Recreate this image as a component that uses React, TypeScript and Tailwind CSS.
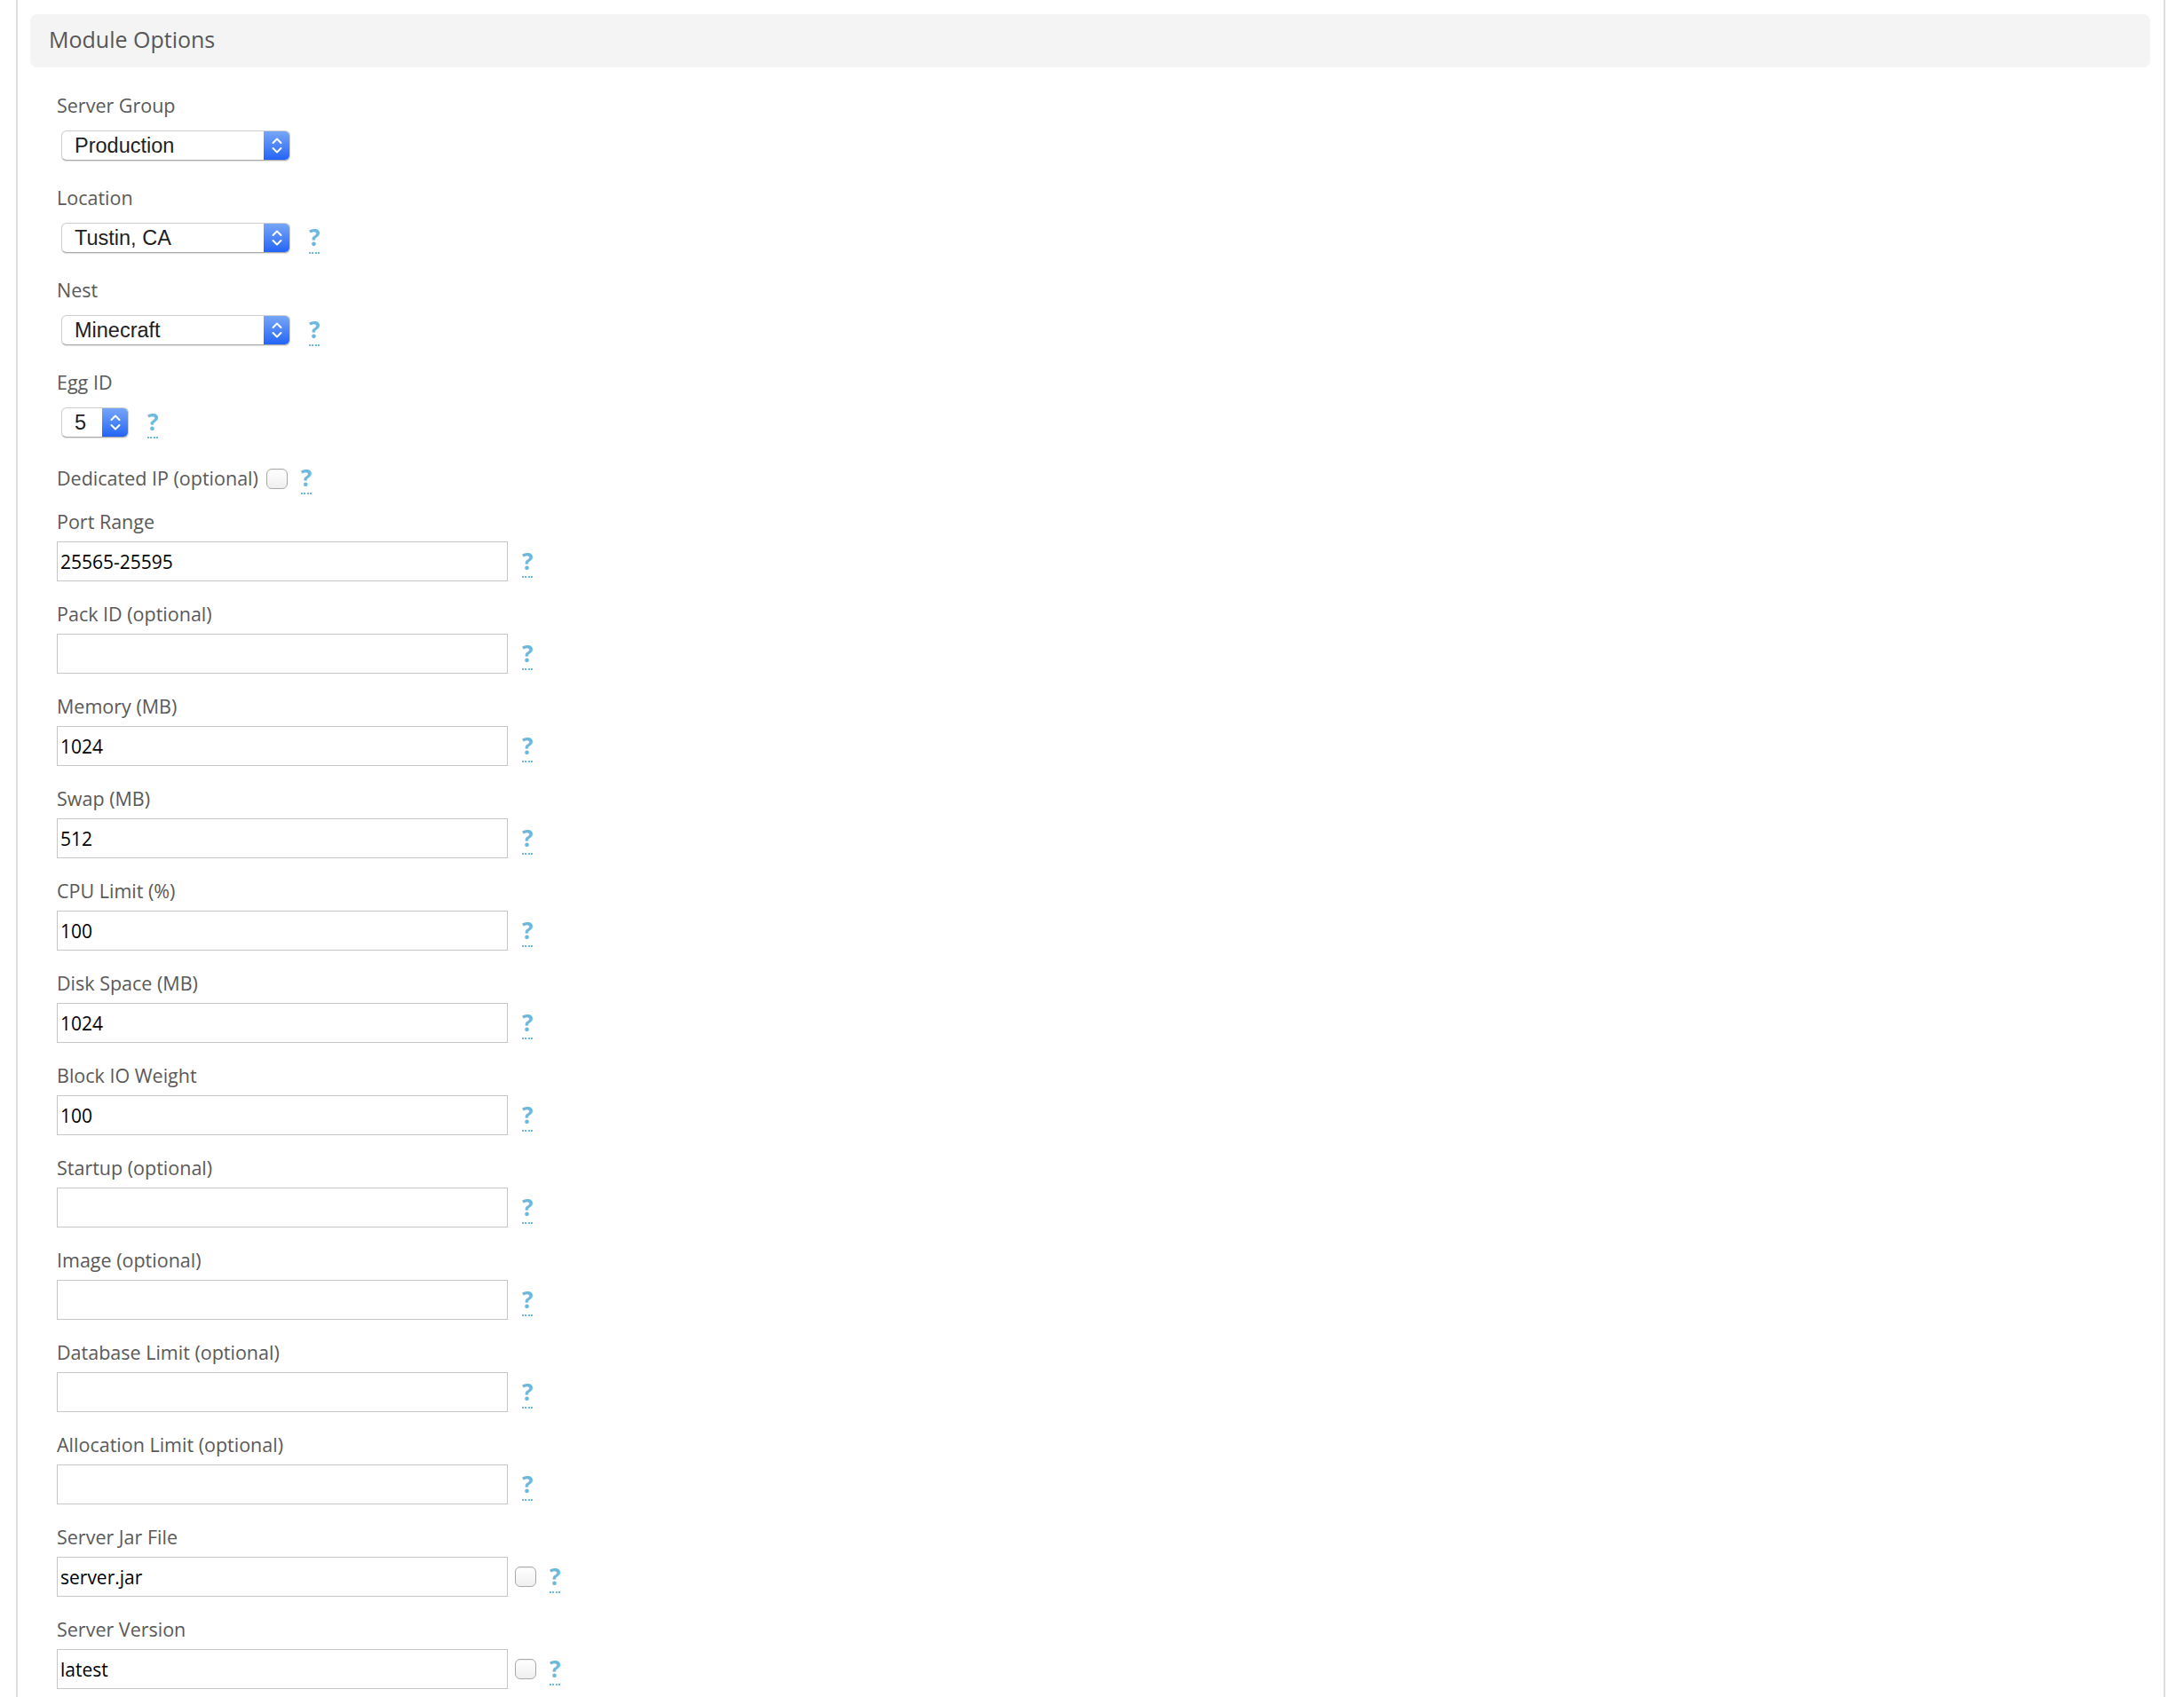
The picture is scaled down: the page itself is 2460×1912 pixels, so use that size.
import React from "react";

function Help() {
  return (
    <span className="inline-block text-[26px] font-bold leading-[34px] text-[#6cb9dd] border-b-2 border-dotted border-[#6cb9dd] cursor-help select-none">
      ?
    </span>
  );
}

function Check() {
  return (
    <span className="inline-block w-[24px] h-[23px] rounded-[6px] border border-[#a9a9a9] bg-gradient-to-b from-white to-[#efefef] shadow-[inset_0_1px_1px_rgba(0,0,0,0.06)]" />
  );
}

function NativeSelect({ value, width }: { value: string; width: string }) {
  return (
    <div
      className={`flex h-[34px] ${width} rounded-[6px] bg-white border border-[#cdcdcd] border-b-[#aaaaaa] shadow-[0_1px_1px_rgba(0,0,0,0.12)] overflow-hidden`}
    >
      <span className="flex-1 pl-[14px] leading-[32px] text-[23.5px] text-[#1e1e1e] font-['Liberation_Sans',Arial,sans-serif] whitespace-nowrap">
        {value}
      </span>
      <span className="w-[29px] flex items-center justify-center bg-gradient-to-b from-[#76a5f7] to-[#2363f5]">
        <svg width="12" height="22" viewBox="0 0 12 22" fill="none">
          <path d="M1.5 8 L6 3.5 L10.5 8" stroke="white" strokeWidth="2" strokeLinecap="round" strokeLinejoin="round" />
          <path d="M1.5 14 L6 18.5 L10.5 14" stroke="white" strokeWidth="2" strokeLinecap="round" strokeLinejoin="round" />
        </svg>
      </span>
    </div>
  );
}

function SelectRow({
  label,
  value,
  width,
  help,
  last,
}: {
  label: string;
  value: string;
  width: string;
  help: boolean;
  last?: boolean;
}) {
  return (
    <div className={last ? "mb-[31px]" : "mb-[27px]"}>
      <div className="h-[30px] leading-[30px] text-[21.5px] text-[#595959]">{label}</div>
      <div className="mt-[13px] flex h-[34px] items-center pl-[5px]">
        <NativeSelect value={value} width={width} />
        {help && (
          <span className="ml-[21px] flex items-center">
            <Help />
          </span>
        )}
      </div>
    </div>
  );
}

function InputRow({
  label,
  value,
  check,
  last,
}: {
  label: string;
  value: string;
  check?: boolean;
  last?: boolean;
}) {
  return (
    <div className={last ? "" : "mb-[22px]"}>
      <div className="h-[30px] leading-[30px] text-[21.5px] text-[#595959]">{label}</div>
      <div className="mt-[7px] flex h-[45px] items-center">
        <input
          readOnly
          value={value}
          className="h-[45px] w-[508px] border border-[#c6c6c6] bg-white px-[3px] text-[21px] text-black outline-none font-['Open_Sans',sans-serif]"
        />
        {check ? (
          <>
            <span className="ml-[8px] flex items-center">
              <Check />
            </span>
            <span className="ml-[15px] flex items-center">
              <Help />
            </span>
          </>
        ) : (
          <span className="ml-[16px] flex items-center">
            <Help />
          </span>
        )}
      </div>
    </div>
  );
}

export default function App() {
  const inputs: { label: string; value: string; check?: boolean }[] = [
    { label: "Port Range", value: "25565-25595" },
    { label: "Pack ID (optional)", value: "" },
    { label: "Memory (MB)", value: "1024" },
    { label: "Swap (MB)", value: "512" },
    { label: "CPU Limit (%)", value: "100" },
    { label: "Disk Space (MB)", value: "1024" },
    { label: "Block IO Weight", value: "100" },
    { label: "Startup (optional)", value: "" },
    { label: "Image (optional)", value: "" },
    { label: "Database Limit (optional)", value: "" },
    { label: "Allocation Limit (optional)", value: "" },
    { label: "Server Jar File", value: "server.jar", check: true },
    { label: "Server Version", value: "latest", check: true },
  ];

  return (
    <div className="min-h-screen bg-white font-['Open_Sans',sans-serif]">
      <div className="ml-[18px] mr-[21px] min-h-[1912px] border-x-2 border-[#dddddd] pl-[14px] pr-[15px] pt-[16px]">
        <div className="h-[60px] rounded-[8px] bg-[#f4f4f4] pl-[21px] pt-[11px]">
          <h2 className="text-[25px] leading-[34px] text-[#575757]">Module Options</h2>
        </div>

        <div className="pl-[30px] pt-[28px]">
          <SelectRow label="Server Group" value="Production" width="w-[258px]" help={false} />
          <SelectRow label="Location" value="Tustin, CA" width="w-[258px]" help />
          <SelectRow label="Nest" value="Minecraft" width="w-[258px]" help />
          <SelectRow label="Egg ID" value="5" width="w-[76px]" help last />

          <div className="mb-[19px] flex h-[30px] items-center">
            <span className="leading-[30px] text-[21.5px] text-[#595959]">Dedicated IP (optional)</span>
            <span className="ml-[9px] flex items-center">
              <Check />
            </span>
            <span className="ml-[15px] flex items-center">
              <Help />
            </span>
          </div>

          {inputs.map((r, i) => (
            <InputRow
              key={r.label}
              label={r.label}
              value={r.value}
              check={r.check}
              last={i === inputs.length - 1}
            />
          ))}
        </div>
      </div>
    </div>
  );
}
